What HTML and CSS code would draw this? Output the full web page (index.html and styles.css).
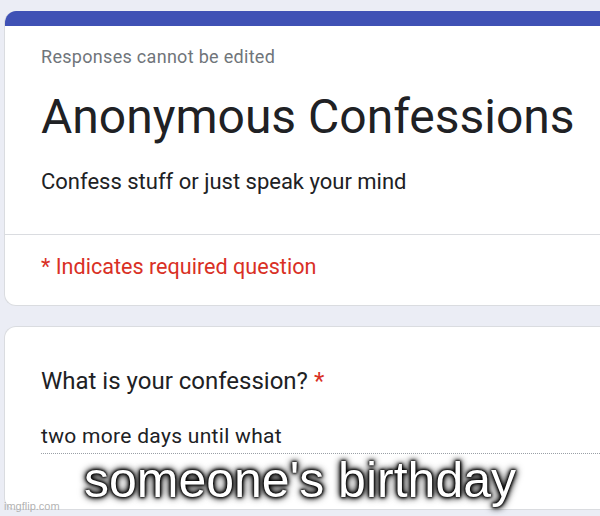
FILE: index.html
```html
<!DOCTYPE html>
<html>
<head>
<meta charset="utf-8">
<link rel="stylesheet" href="styles.css">
</head>
<body>
<div class="page">
  <section class="card header-card">
    <div class="band"></div>
    <div class="head-body">
      <div class="note">Responses cannot be edited</div>
      <h1 class="title">Anonymous Confessions</h1>
      <div class="desc">Confess stuff or just speak your mind</div>
    </div>
    <div class="req">* Indicates required question</div>
  </section>
  <section class="card question-card">
    <div class="q">What is your confession? <span class="star">*</span></div>
    <div class="answer">two more days until what</div>
  </section>
</div>
<div class="caption">someone's birthday</div>
<div class="watermark">imgflip.com</div>
</body>
</html>
```
FILE: styles.css
```css
html, body {
  margin: 0;
  padding: 0;
}
body {
  width: 600px;
  height: 516px;
  overflow: hidden;
  background: #ebedf5;
  font-family: Roboto, "Noto Sans", sans-serif;
  position: relative;
}
.page {
  padding: 11px 0 0 4px;
  display: flex;
  flex-direction: column;
  gap: 20px;
}
.card {
  background: #fff;
  border: 1px solid #dadce0;
  border-right: none;
  border-radius: 12px 0 0 12px;
  margin-right: -20px;
}
.header-card {
  height: 295px;
  box-sizing: border-box;
  border-top: none;
  overflow: hidden;
  display: flex;
  flex-direction: column;
}
.band {
  height: 15px;
  flex: none;
  background: #3f51b5;
}
.head-body {
  flex: none;
  padding: 19px 0 0 36px;
  border-bottom: 1px solid #dadce0;
  height: 209px;
  box-sizing: border-box;
}
.note {
  font-size: 18px;
  letter-spacing: 0.3px;
  color: #70757a;
  line-height: 24px;
}
.title {
  margin: 0;
  font-weight: 400;
  font-size: 48px;
  line-height: 60px;
  color: #202124;
  padding-top: 18px;
}
.desc {
  font-size: 22px;
  line-height: 30px;
  color: #202124;
  padding-top: 20px;
}
.req {
  padding: 17px 0 0 36px;
  font-size: 21.6px;
  line-height: 30px;
  color: #d93025;
}
.question-card {
  height: 184px;
  padding: 39px 0 0 36px;
  box-sizing: border-box;
}
.q {
  font-size: 24px;
  line-height: 30px;
  color: #202124;
}
.star { color: #d93025; }
.answer {
  margin-top: 26px;
  font-size: 21px;
  letter-spacing: 0.3px;
  line-height: 28px;
  color: #202124;
  border-bottom: 1px dotted #9aa0a6;
  padding-bottom: 3px;
}
.caption {
  position: absolute;
  left: 0;
  right: 0;
  top: 452px;
  text-align: center;
  font-family: "Liberation Sans", Arial, sans-serif;
  font-size: 50px;
  line-height: 56px;
  color: #fff;
  text-shadow: 0 0 2px #000, 0 0 3px #000, 0 0 4px #000, 0 0 6px #000, 0 0 8px #000;
}
.watermark {
  position: absolute;
  left: 4px;
  top: 500px;
  font-family: "Liberation Sans", Arial, sans-serif;
  font-size: 11px;
  color: rgba(170,170,170,0.9);
}
```
